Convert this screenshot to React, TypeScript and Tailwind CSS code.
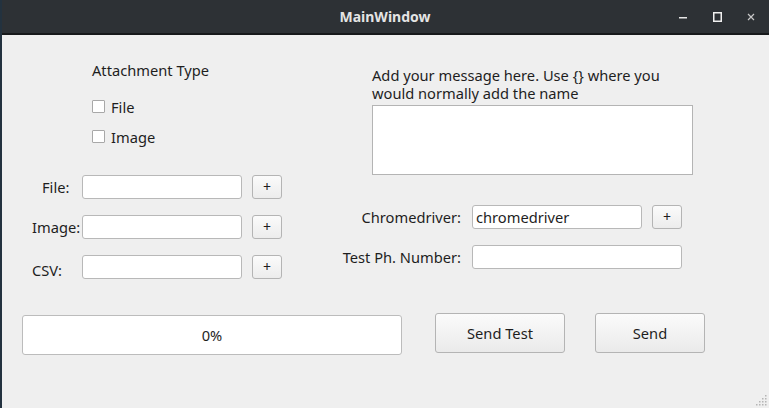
import React from 'react';

const font = { fontFamily: '"Noto Sans", "Open Sans", sans-serif' };

function QInput({ w, value }: { w: string; value?: string }) {
  return (
    <div className={`${w} flex h-[24px] items-center rounded-[3px] border border-[#b8b8b8] bg-white px-[3px] text-[14.67px] text-[#1e1e1e]`}>
      {value}
    </div>
  );
}

function PlusButton() {
  return (
    <div className="ml-[10px] flex h-[24px] w-[30px] items-center justify-center rounded-[3px] border border-[#b4b4b4] bg-gradient-to-b from-[#fbfbfb] to-[#ececec] text-[14px] leading-none text-[#1e1e1e]">
      +
    </div>
  );
}

function CheckRow({ label, cls }: { label: string; cls: string }) {
  return (
    <div className={`${cls} flex h-[20px] items-center`}>
      <div className="mb-[2px] h-[13px] w-[13px] rounded-[1px] border border-[#a8a8a8] bg-white" />
      <span className="ml-[6px]">{label}</span>
    </div>
  );
}

export default function App() {
  return (
    <div className="flex h-[408px] w-[769px] overflow-hidden bg-[#1f2b36]" style={font}>
      <div className="w-[2px] bg-[#23323f]" />
      <div className="flex w-[767px] flex-col">
        {/* title bar */}
        <div className="flex h-[35px] items-center border-b-2 border-[#17191b] bg-[#2d3135]">
          <div className="flex-1" />
          <div className="text-[14px] font-bold text-[#e4e4e4]">MainWindow</div>
          <div className="flex flex-1 justify-end pr-[1px]">
            <div className="flex h-[33px] w-[34px] items-center justify-center">
              <svg width="10" height="10" viewBox="0 0 10 10"><rect x="1" y="5" width="8" height="1.5" fill="#e6e6e6" /></svg>
            </div>
            <div className="flex h-[33px] w-[34px] items-center justify-center">
              <svg width="10" height="10" viewBox="0 0 10 10"><rect x="1.75" y="0.75" width="7.5" height="8.5" fill="none" stroke="#f0f0f0" strokeWidth="1.5" /></svg>
            </div>
            <div className="flex h-[33px] w-[34px] items-center justify-center">
              <svg width="8" height="8" viewBox="0 0 8 8"><path d="M1 1 L7 7 M7 1 L1 7" stroke="#c8c8c8" strokeWidth="1.2" /></svg>
            </div>
          </div>
        </div>

        {/* content */}
        <div className="relative flex-1 bg-[#efefef] text-[14.67px] text-[#1e1e1e]">
          <div className="flex">
            <div className="w-[330px] pt-[25px]">
              <div className="ml-[90px] leading-[20px]">Attachment Type</div>
              <CheckRow label="File" cls="ml-[90px] mt-[17px]" />
              <CheckRow label="Image" cls="ml-[90px] mt-[10px]" />

              <div className="mt-[28px] flex items-center">
                <div className="w-[80px] pl-[40px]">File:</div>
                <QInput w="w-[160px]" />
                <PlusButton />
              </div>
              <div className="mt-[16px] flex items-center">
                <div className="w-[80px] pl-[30px]">Image:</div>
                <QInput w="w-[160px]" />
                <PlusButton />
              </div>
              <div className="mt-[16px] flex items-center">
                <div className="w-[80px] translate-y-[3px] pl-[30px]">CSV:</div>
                <QInput w="w-[160px]" />
                <PlusButton />
              </div>
            </div>

            <div className="pt-[31px]">
              <div className="ml-[40px] whitespace-nowrap leading-[18px]">
                <div>Add your message here. Use {'{}'} where you</div>
                <div>would normally add the name</div>
              </div>
              <div className="ml-[40px] mt-[3px] h-[70px] w-[321px] border border-[#b4b4b4] bg-white" />

              <div className="mt-[30px] flex items-center">
                <div className="w-[129px] pl-[1px] text-right">Chromedriver:</div>
                <div className="ml-[11px]">
                  <QInput w="w-[170px]" value="chromedriver" />
                </div>
                <PlusButton />
              </div>
              <div className="mt-[16px] flex items-center">
                <div className="w-[129px] text-right">Test Ph. Number:</div>
                <div className="ml-[11px]">
                  <QInput w="w-[210px]" />
                </div>
              </div>
            </div>
          </div>

          <div className="mt-[34px] flex items-start">
            <div className="ml-[20px] mt-[2px] flex h-[40px] w-[380px] items-center justify-center rounded-[3px] border border-[#bcbcbc] bg-white">
              0%
            </div>
            <div className="ml-[33px] flex h-[40px] w-[130px] items-center justify-center rounded-[3px] border border-[#b4b4b4] bg-gradient-to-b from-[#fbfbfb] to-[#eaeaea]">
              Send Test
            </div>
            <div className="ml-[30px] flex h-[40px] w-[110px] items-center justify-center rounded-[3px] border border-[#b4b4b4] bg-gradient-to-b from-[#fbfbfb] to-[#eaeaea]">
              Send
            </div>
          </div>

          {/* size grip */}
          <svg className="absolute bottom-[2px] right-[2px]" width="11" height="11" viewBox="0 0 11 11">
            {[
              [9, 0], [6, 3], [9, 3], [3, 6], [6, 6], [9, 6], [0, 9], [3, 9], [6, 9], [9, 9],
            ].map(([x, y]) => (
              <rect key={`${x}-${y}`} x={x} y={y} width="1.5" height="1.5" fill="#b5b5b5" />
            ))}
          </svg>
        </div>
      </div>
    </div>
  );
}
